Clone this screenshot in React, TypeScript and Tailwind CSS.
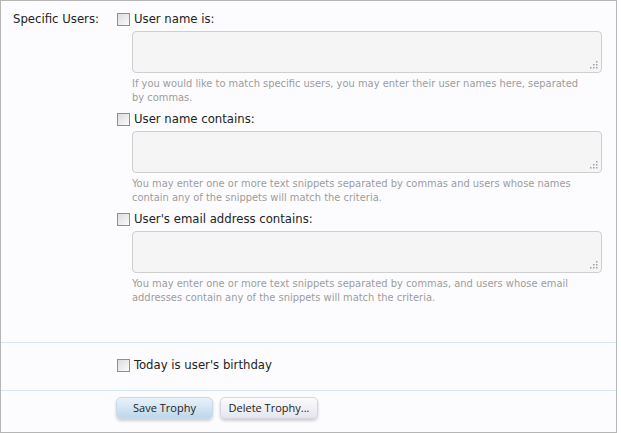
import React from "react";

const font = { fontFamily: '"DejaVu Sans Condensed", "DejaVu Sans", sans-serif' };

function Checkbox() {
  return (
    <span className="inline-block w-[13px] h-[13px] border border-[#8f8f8f] bg-gradient-to-br from-[#dcdcdc] to-[#fbfbfb] shrink-0" />
  );
}

function Grip() {
  return (
    <svg className="absolute right-[3px] bottom-[3px]" width="9" height="9" viewBox="0 0 9 9">
      <rect x="7" y="1" width="1.5" height="1.5" fill="#a0a0a0" />
      <rect x="4" y="4" width="1.5" height="1.5" fill="#a0a0a0" />
      <rect x="7" y="4" width="1.5" height="1.5" fill="#a0a0a0" />
      <rect x="1" y="7" width="1.5" height="1.5" fill="#a0a0a0" />
      <rect x="4" y="7" width="1.5" height="1.5" fill="#a0a0a0" />
      <rect x="7" y="7" width="1.5" height="1.5" fill="#a0a0a0" />
    </svg>
  );
}

function Item({ label, hint, last }: { label: string; hint: React.ReactNode; last?: boolean }) {
  return (
    <div className={last ? "" : "mb-[5px]"}>
      <div className="flex items-center h-[18px] gap-[4px]">
        <Checkbox />
        <span className="text-[13px] text-[#222]">{label}</span>
      </div>
      <div className="relative ml-[15px] mt-[3px] w-[470px] h-[42px] border border-[#cfcfcf] rounded-[4px] bg-[#f5f5f5]">
        <Grip />
      </div>
      <div className="ml-[15px] mt-[4px] w-[470px] text-[11px] leading-[14px] text-[#9c9c9c]">{hint}</div>
    </div>
  );
}

export default function App() {
  return (
    <div style={font} className="w-[617px] h-[433px] border border-[#b5b5b5] bg-[#fcfcff] flex flex-col">
      <div className="flex pt-[9px] pb-[37px] border-b border-[#d8e6f2]">
        <div className="w-[116px] pl-[12px] h-[18px] flex items-center text-[13px] text-[#222]">Specific Users:</div>
        <div className="flex flex-col">
          <Item
            label="User name is:"
            hint={<>If you would like to match specific users, you may enter their user names here, separated<br />by commas.</>}
          />
          <Item
            label="User name contains:"
            hint={<>You may enter one or more text snippets separated by commas and users whose names<br />contain any of the snippets will match the criteria.</>}
          />
          <Item
            label="User's email address contains:"
            last
            hint={<>You may enter one or more text snippets separated by commas, and users whose email<br />addresses contain any of the snippets will match the criteria.</>}
          />
        </div>
      </div>
      <div className="flex pt-[13px] pb-[16px] border-b border-[#d8e6f2]">
        <div className="w-[116px]" />
        <div className="flex items-center h-[18px] gap-[4px]">
          <Checkbox />
          <span className="text-[13px] text-[#222]">Today is user's birthday</span>
        </div>
      </div>
      <div className="flex pt-[6px] pl-[115px] gap-[7px]" style={{ fontFamily: '"Open Sans", "Liberation Sans", sans-serif' }}>
        <button className="w-[97px] h-[22px] rounded-[5px] text-[11px] text-[#222] bg-gradient-to-b from-[#eaf2fa] to-[#bcd7ec] border border-[#c9d9e8] shadow-[0_2px_3px_rgba(0,0,0,0.18)]">
          Save Trophy
        </button>
        <button className="w-[98px] h-[22px] rounded-[5px] text-[11px] text-[#222] bg-gradient-to-b from-[#fbfbfd] to-[#e5e5ee] border border-[#d5d5de] shadow-[0_2px_3px_rgba(0,0,0,0.18)]">
          Delete Trophy...
        </button>
      </div>
    </div>
  );
}
